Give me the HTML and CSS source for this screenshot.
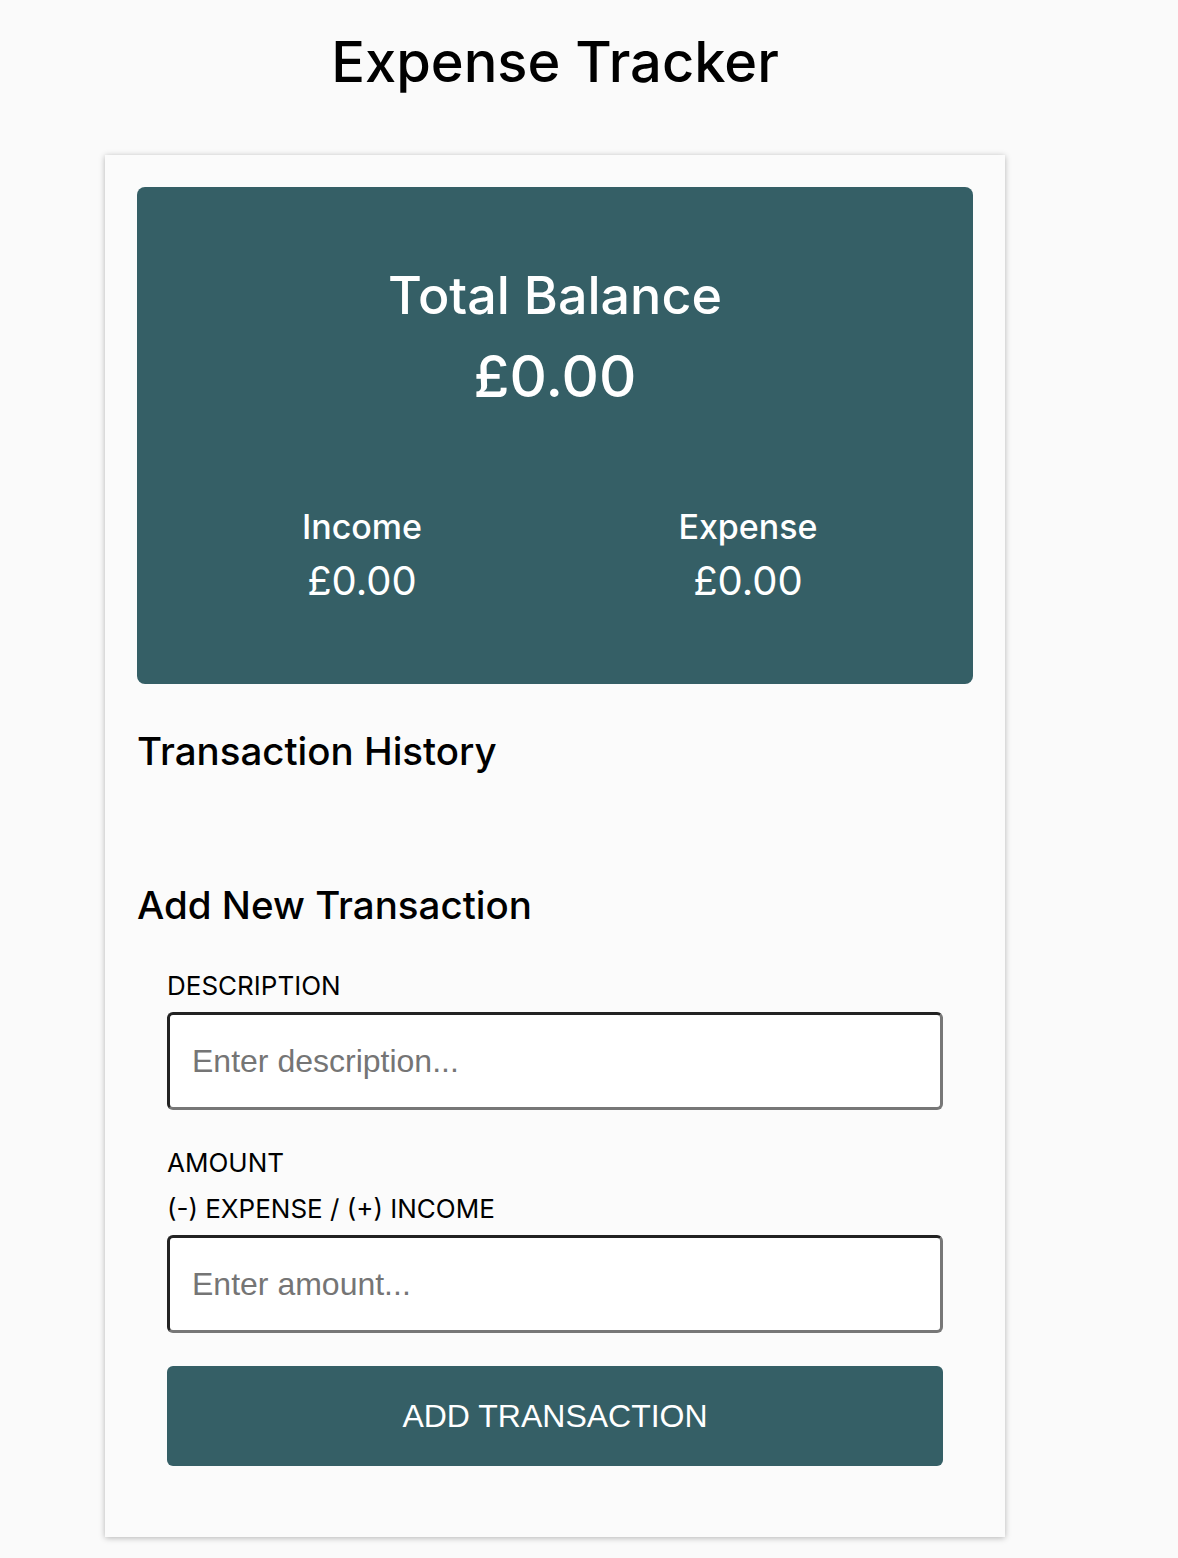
FILE: index.html
```html
<!DOCTYPE html>
<html lang="en">
<head>
<meta charset="utf-8">
<title>Expense Tracker</title>
<link rel="stylesheet" href="styles.css">
</head>
<body>
<div class="page">
  <h1 class="title">Expense Tracker</h1>
  <main class="card">
    <section class="balance">
      <h2 class="balance-label">Total Balance</h2>
      <div class="balance-amount">£0.00</div>
      <div class="split">
        <div class="split-col">
          <div class="split-label">Income</div>
          <div class="split-amount">£0.00</div>
        </div>
        <div class="split-col">
          <div class="split-label">Expense</div>
          <div class="split-amount">£0.00</div>
        </div>
      </div>
    </section>
    <h3 class="section-title history">Transaction History</h3>
    <h3 class="section-title">Add New Transaction</h3>
    <form class="form">
      <label class="field">
        <span class="field-label">DESCRIPTION</span>
        <input class="input" type="text" placeholder="Enter description...">
      </label>
      <label class="field">
        <span class="field-label">AMOUNT<br>(-) EXPENSE / (+) INCOME</span>
        <input class="input" type="text" placeholder="Enter amount...">
      </label>
      <button class="btn" type="button">ADD TRANSACTION</button>
    </form>
  </main>
</div>
</body>
</html>
```
FILE: styles.css
```css
* { box-sizing: border-box; }
html, body { margin: 0; padding: 0; background: #fafafa; }
body { font-family: "Inter", "Noto Sans", sans-serif; color: #000; }

.page {
  width: 900px;
  margin-left: 105px;
  padding-top: 26px;
  padding-bottom: 20px;
}

.title {
  margin: 0 0 57px;
  text-align: center;
  font-size: 56px;
  font-weight: 500;
  line-height: 72px;
}

.card {
  background: #fbfbfb;
  box-shadow: 0 1px 6px rgba(0, 0, 0, 0.28);
  padding: 32px 32px 71px;
}

.balance {
  background: #355f66;
  color: #fff;
  border-radius: 8px;
  padding: 79px 0 76px;
  text-align: center;
}
.balance-label {
  margin: 0;
  font-size: 52px;
  font-weight: 500;
  line-height: 60px;
}
.balance-amount {
  font-size: 58px;
  font-weight: 500;
  line-height: 76px;
  margin-top: 12px;
}
.split {
  display: flex;
  justify-content: center;
  margin-top: 91px;
}
.split-col { width: 386px; }
.split-label { font-size: 34px; font-weight: 500; line-height: 44px; }
.split-amount { font-size: 40px; line-height: 54px; margin-top: 5px; }

.section-title {
  margin: 0;
  font-size: 38.5px;
  font-weight: 500;
  line-height: 48px;
}
.history { margin-top: 43px; margin-bottom: 106px; }

.form {
  padding: 0 30px;
  margin-top: 34px;
}
.field { display: block; margin-bottom: 30px; }
.field-label {
  display: block;
  font-size: 26px;
  line-height: 46px;
  margin-bottom: 3px;
}
.input {
  display: block;
  width: 100%;
  height: 98px;
  border: 3px solid;
  border-color: #222 #777 #777 #222;
  border-radius: 6px;
  background: #fff;
  padding: 0 22px;
  font-family: "Liberation Sans", Arial, sans-serif;
  font-size: 32px;
}
.input::placeholder { color: #757575; }

.btn {
  display: block;
  width: 100%;
  height: 100px;
  margin-top: 33px;
  border: 0;
  border-radius: 6px;
  background: #355f66;
  color: #fff;
  font-family: "Liberation Sans", Arial, sans-serif;
  font-size: 32px;
}
```
